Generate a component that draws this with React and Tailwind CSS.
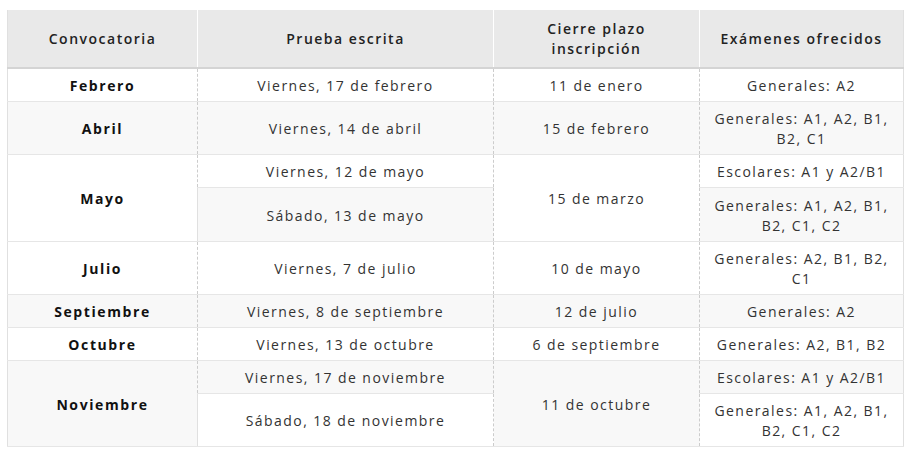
import React from "react";

function Cell({ children, bold, rowSpan, last }) {
  return (
    <td
      rowSpan={rowSpan}
      className={
        "px-3 pt-[7px] pb-[5px] text-center align-middle border-b border-solid border-[#e6e6e6] " +
        (last ? "border-r border-r-[#e0e0e0]" : "border-r border-r-[#cccccc] [border-right-style:dashed]") +
        (bold ? " font-bold text-[#111] tracking-[1.6px]" : "")
      }
    >
      {children}
    </td>
  );
}

const th = "font-semibold text-[#222] border-b-2 border-b-[#d4d4d4] py-2 tracking-[1.5px]";

export default function App() {
  return (
    <div className="bg-white w-[911px] h-[457px] pt-[10px] pl-[7px]" style={{ fontFamily: '"Open Sans", sans-serif' }}>
      <table className="border-collapse table-fixed w-[896px] text-[14px] leading-[20px] tracking-[1.45px] text-[#333]">
        <colgroup>
          <col className="w-[190px]" />
          <col className="w-[296px]" />
          <col className="w-[206px]" />
          <col className="w-[204px]" />
        </colgroup>
        <thead>
          <tr className="bg-[#e9e9e9] h-[58px]">
            <th className={th + " px-2 border-r border-r-white border-l border-l-[#e0e0e0]"}>Convocatoria</th>
            <th className={th + " px-2 border-r border-r-white"}>Prueba escrita</th>
            <th className={th + " px-8 border-r border-r-white"}>Cierre plazo inscripción</th>
            <th className={th + " px-2 border-r border-r-[#e0e0e0]"}>Exámenes ofrecidos</th>
          </tr>
        </thead>
        <tbody className="[&_td:first-child]:border-l [&_td:first-child]:border-l-[#e0e0e0]">
          <tr className="bg-white h-[33px]">
            <Cell bold>Febrero</Cell>
            <Cell>Viernes, 17 de febrero</Cell>
            <Cell>11 de enero</Cell>
            <Cell last>Generales: A2</Cell>
          </tr>
          <tr className="bg-[#f8f8f8] h-[53px]">
            <Cell bold>Abril</Cell>
            <Cell>Viernes, 14 de abril</Cell>
            <Cell>15 de febrero</Cell>
            <Cell last>Generales: A1, A2, B1, B2, C1</Cell>
          </tr>
          <tr className="bg-white h-[33px]">
            <Cell bold rowSpan={2}>Mayo</Cell>
            <Cell>Viernes, 12 de mayo</Cell>
            <Cell rowSpan={2}>15 de marzo</Cell>
            <Cell last>Escolares: A1 y A2/B1</Cell>
          </tr>
          <tr className="bg-[#f8f8f8] h-[54px]">
            <Cell>Sábado, 13 de mayo</Cell>
            <Cell last>Generales: A1, A2, B1, B2, C1, C2</Cell>
          </tr>
          <tr className="bg-white h-[53px]">
            <Cell bold>Julio</Cell>
            <Cell>Viernes, 7 de julio</Cell>
            <Cell>10 de mayo</Cell>
            <Cell last>Generales: A2, B1, B2, C1</Cell>
          </tr>
          <tr className="bg-[#f8f8f8] h-[33px]">
            <Cell bold>Septiembre</Cell>
            <Cell>Viernes, 8 de septiembre</Cell>
            <Cell>12 de julio</Cell>
            <Cell last>Generales: A2</Cell>
          </tr>
          <tr className="bg-white h-[33px]">
            <Cell bold>Octubre</Cell>
            <Cell>Viernes, 13 de octubre</Cell>
            <Cell>6 de septiembre</Cell>
            <Cell last>Generales: A2, B1, B2</Cell>
          </tr>
          <tr className="bg-[#f8f8f8] h-[32px]">
            <Cell bold rowSpan={2}>Noviembre</Cell>
            <Cell>Viernes, 17 de noviembre</Cell>
            <Cell rowSpan={2}>11 de octubre</Cell>
            <Cell last>Escolares: A1 y A2/B1</Cell>
          </tr>
          <tr className="bg-white h-[53px]">
            <Cell>Sábado, 18 de noviembre</Cell>
            <Cell last>Generales: A1, A2, B1, B2, C1, C2</Cell>
          </tr>
        </tbody>
      </table>
    </div>
  );
}
